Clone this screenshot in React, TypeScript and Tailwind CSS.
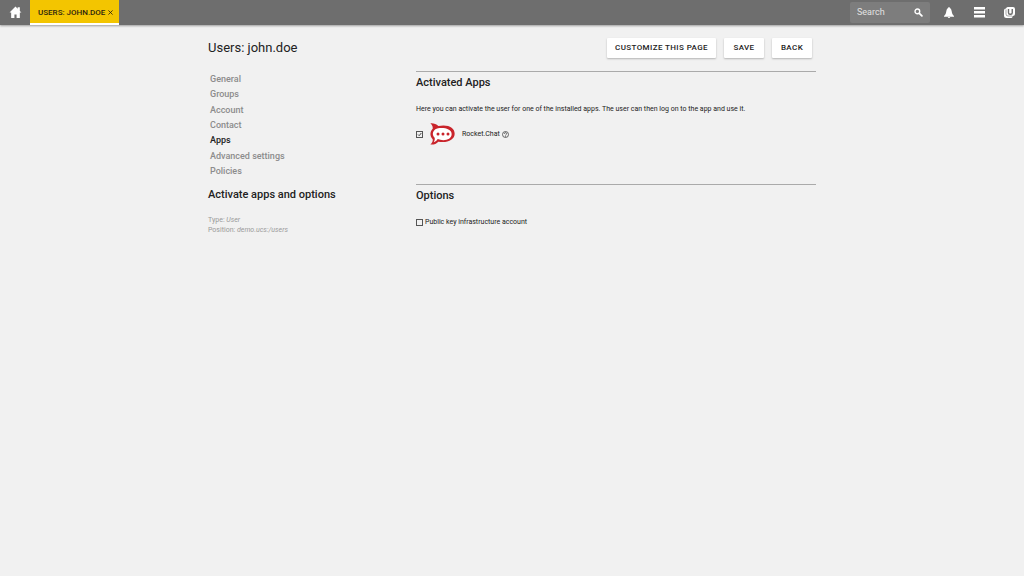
import { useState } from "react";

const navItems = [
  "General",
  "Groups",
  "Account",
  "Contact",
  "Apps",
  "Advanced settings",
  "Policies",
];

const actions = ["Customize this page", "Save", "Back"];

function HomeIcon() {
  return (
    <svg viewBox="0 0 24 24" className="size-[13px]" fill="currentColor" aria-hidden="true">
      <path d="M12 1 1 12.200h3V22h6v-6.500h4V22h6v-9.800h3l-3-3.100V2.500h-4v2.500z" />
    </svg>
  );
}

function SearchIcon() {
  return (
    <svg viewBox="0 0 16 16" className="size-[9px]" fill="none" stroke="currentColor" aria-hidden="true">
      <circle cx="6" cy="6" r="4.200" strokeWidth="2.400" />
      <path d="m9.500 9.500 4.500 4.500" strokeWidth="3.200" strokeLinecap="round" />
    </svg>
  );
}

function BellIcon() {
  return (
    <svg viewBox="0 0 20 22" className="h-[11px] w-2.5" fill="currentColor" aria-hidden="true">
      <path d="M10 0c1 0 1.600.8 1.600 1.800C14 3 15 5.500 15.500 9c.5 4 1.500 6.500 4.500 9v1.500H0V18c3-2.500 4-5 4.500-9C5 5.500 6 3 8.400 1.800 8.400.8 9 0 10 0zM7.500 20h5c-.2 1.300-1.200 2-2.500 2s-2.300-.7-2.500-2z" />
    </svg>
  );
}

function MenuIcon() {
  return (
    <svg viewBox="0 0 11 11" className="size-[11px]" fill="currentColor" aria-hidden="true">
      <path d="M0 0h11v2.600H0zM0 4h11v2.600H0zM0 8h11v2.600H0z" />
    </svg>
  );
}

function UniventionIcon() {
  return (
    <svg viewBox="0 0 22 22" className="size-[11px]" aria-hidden="true">
      <path d="M8 0h10a4 4 0 0 1 4 4v9a5 5 0 0 1-5 5v1a3 3 0 0 1-3 3H5a5 5 0 0 1-5-5V7a4 4 0 0 1 4-4 4 4 0 0 1 4-3z" fill="#fff" />
      <path d="M4 5v9a4 4 0 0 0 4 4h8" fill="none" stroke="#6e6e6e" strokeWidth="1.200" />
      <path d="M9 4v7.500a3 3 0 0 0 3 3h1.500a3 3 0 0 0 3-3V4" fill="none" stroke="#6e6e6e" strokeWidth="2.800" />
    </svg>
  );
}

function RocketChatLogo() {
  return (
    <svg viewBox="0 0 75 66" className="h-[22px] w-[25px]" aria-hidden="true">
      <path
        d="M1 1c9-1 18 2 24 8 29-6 49 5 49 23S52 61 25 56C18 63 9 66 1 64c6-5 8-10 7-15C-1 39-1 27 8 17 9 11 6 6 1 1z"
        fill="#c9242b"
      />
      <path
        d="M16 19c13-8 49-5 49 14S39 55 23 48c-3 5-7 8-12 10 3-5 4-9 3-14C6 37 7 26 16 19z"
        fill="#fff"
      />
      <g fill="#c9242b">
        <circle cx="24" cy="33" r="4.500" />
        <circle cx="39" cy="33" r="4.500" />
        <circle cx="54" cy="33" r="4.500" />
      </g>
    </svg>
  );
}

function HelpIcon() {
  return (
    <svg viewBox="0 0 14 14" className="size-[7px]" fill="none" stroke="#444" strokeWidth="1.600" aria-hidden="true">
      <circle cx="7" cy="7" r="6" />
      <path d="M4.800 5.600a2.200 2.200 0 1 1 3.300 1.800C7.300 7.900 7 8.300 7 9M7 10v1.500" />
    </svg>
  );
}

function CheckBox({ id, defaultChecked }: { id: string; defaultChecked?: boolean }) {
  return (
    <span className="grid size-[7px] shrink-0">
      <input
        id={id}
        type="checkbox"
        defaultChecked={defaultChecked}
        className="peer col-start-1 row-start-1 size-[7px] appearance-none border border-[#555]"
      />
      <svg
        viewBox="0 0 7 7"
        className="pointer-events-none invisible col-start-1 row-start-1 size-[7px] peer-checked:visible"
        fill="none"
        stroke="#444"
        aria-hidden="true"
      >
        <path d="m2 3.500 1.200 1.200L5.300 2" />
      </svg>
    </span>
  );
}

function Header() {
  return (
    <header className="flex h-[25px] items-center bg-[#6e6e6e] text-white shadow-[0_1px_2px_rgba(0,0,0,0.35)]">
      <button aria-label="Home" className="flex h-full w-[30px] items-center justify-center">
        <HomeIcon />
      </button>
      <div className="flex h-full items-center border-b-2 border-white bg-[#f3c500] pt-0.5 pr-1 pl-2 text-[#2b2410]">
        <a href="#user" className="text-[8px] font-medium uppercase">
          Users: john.doe
        </a>
        <button aria-label="Close tab" className="flex size-2.5 items-center justify-center">
          <svg viewBox="0 0 6 6" className="size-[5px]" stroke="currentColor" aria-hidden="true">
            <path d="m.5.5 5 5m0-5-5 5" />
          </svg>
        </button>
      </div>
      <div className="ml-auto flex items-center">
        <label className="flex h-[21px] w-20 items-center rounded-[2px] bg-[#7d7d7d] px-[7px]">
          <input
            type="text"
            aria-label="Search"
            placeholder="Search"
            className="w-full min-w-0 flex-1 text-[9px] outline-none placeholder:text-[#e2e2e2]"
          />
          <SearchIcon />
        </label>
        <div className="flex pl-1">
          <button aria-label="Notifications" className="flex w-[30px] justify-center">
            <BellIcon />
          </button>
          <button aria-label="Menu" className="flex w-[30px] justify-center">
            <MenuIcon />
          </button>
          <button aria-label="Univention" className="flex w-[30px] justify-center">
            <UniventionIcon />
          </button>
        </div>
      </div>
    </header>
  );
}

export default function App() {
  const [activeItem, setActiveItem] = useState("Apps");

  return (
    <div className="min-h-screen bg-[#f1f1f1] font-[Roboto,sans-serif] text-[#222]">
      <Header />

      <main className="mx-auto max-w-[608px] pt-[13px]">
        <div className="flex items-center justify-between pr-1">
          <h1 className="text-[13px] leading-5">Users: john.doe</h1>
          <div className="flex gap-2">
            {actions.map((action) => (
              <button
                key={action}
                className="h-5 min-w-10 rounded-[1px] bg-white px-2 text-[8px] font-medium tracking-wider uppercase shadow-[0_1px_2px_rgba(0,0,0,0.25)]"
              >
                {action}
              </button>
            ))}
          </div>
        </div>

        <div className="mt-[13px] flex gap-2">
          <aside className="w-[200px] shrink-0">
            <nav className="mt-0.5 flex h-[104px] flex-col items-start justify-between pl-0.5">
              {navItems.map((item) => (
                <button
                  key={item}
                  onClick={() => setActiveItem(item)}
                  className={`text-[9px] leading-3 font-medium ${
                    activeItem === item ? "text-[#222]" : "text-[#8c8c8c]"
                  }`}
                >
                  {item}
                </button>
              ))}
            </nav>
            <h2 className="mt-2.5 text-[11px] leading-4 font-medium">Activate apps and options</h2>
            <div className="mt-3 text-[7px] leading-[10px] text-[#9a9a9a]">
              <p>
                Type: <i>User</i>
              </p>
              <p>
                Position: <i>demo.ucs:/users</i>
              </p>
            </div>
          </aside>

          <div className="min-w-0 flex-1">
            <section className="h-[113px] border-t border-[#aaa] pt-[3px]">
              <h2 className="text-[11px] leading-4 font-medium">Activated Apps</h2>
              <p className="mt-3 text-[7px] leading-3">
                Here you can activate the user for one of the installed apps. The user can then log on to the app and use it.
              </p>
              <div className="mt-2 flex items-center">
                <CheckBox id="rocket-chat" defaultChecked />
                <label htmlFor="rocket-chat" className="ml-[7px] flex items-center gap-[7px] text-[7px]">
                  <RocketChatLogo />
                  Rocket.Chat
                </label>
                <button aria-label="Help" className="ml-0.5">
                  <HelpIcon />
                </button>
              </div>
            </section>

            <section className="border-t border-[#aaa] pt-[3px]">
              <h2 className="text-[11px] leading-4 font-medium">Options</h2>
              <div className="mt-3 flex items-center gap-0.5">
                <CheckBox id="pki" />
                <label htmlFor="pki" className="text-[7px] leading-3">
                  Public key infrastructure account
                </label>
              </div>
            </section>
          </div>
        </div>
      </main>
    </div>
  );
}
